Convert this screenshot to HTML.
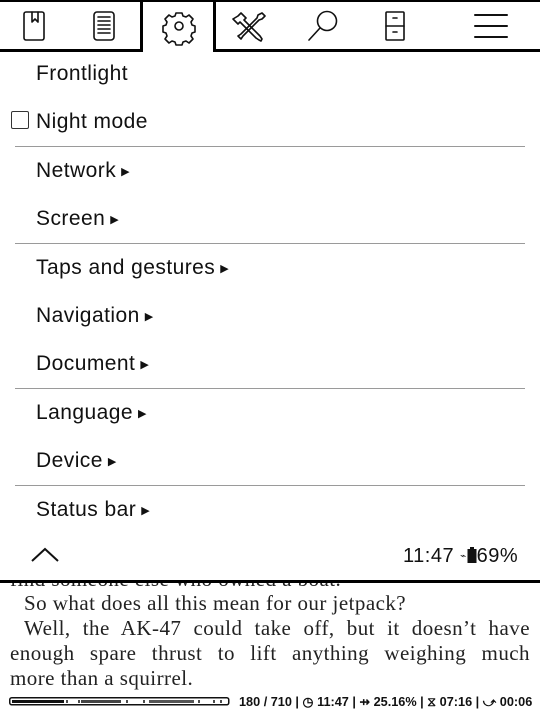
<!DOCTYPE html>
<html><head><meta charset="utf-8"><style>
*{margin:0;padding:0;box-sizing:border-box}
body{width:540px;height:710px;background:#fff;position:relative;overflow:hidden;font-family:"Liberation Sans",sans-serif;color:#111}
.abs{position:absolute}
.item{position:absolute;left:36px;font-size:21px;letter-spacing:0.45px;line-height:24px;white-space:nowrap}
.arr{font-size:11px;vertical-align:2px;margin-left:5px}
.sep{position:absolute;left:15px;width:510px;height:1px;background:#9a9a9a}
.book{position:absolute;font-family:"Liberation Serif",serif;font-size:21px;letter-spacing:0.45px;line-height:21px;color:#222;white-space:nowrap}
.j{width:520px;text-align:justify;text-align-last:justify;white-space:normal}
</style></head><body>
<div class="abs" style="left:0;top:0;width:540px;height:2px;background:#000"></div>
<div class="abs" style="left:0;top:49px;width:143px;height:3px;background:#000"></div>
<div class="abs" style="left:213px;top:49px;width:327px;height:3px;background:#000"></div>
<div class="abs" style="left:140px;top:0;width:3px;height:52px;background:#000"></div>
<div class="abs" style="left:213px;top:0;width:3px;height:52px;background:#000"></div>
<svg class="abs" style="left:0;top:0" width="540" height="52" fill="none" stroke="#111" stroke-width="1.6" stroke-linejoin="round" stroke-linecap="round">
 <rect x="24" y="12" width="20" height="28" rx="2"/><path d="M32 12v10l3-3 3 3V12"/>
 <rect x="94" y="12" width="20" height="28" rx="3"/><path d="M98 17h12M98 21h12M98 25h12M98 29h12M98 33h12"/>
 <circle cx="179" cy="26" r="4"/><path d="M176 13h6l1 3 3 1 3-2 4 4-2 3 1 3 3 1v6l-3 1-1 3 2 3-4 4-3-2-3 1-1 3h-6l-1-3-3-1-3 2-4-4 2-3-1-3-3-1v-6l3-1 1-3-2-3 4-4 3 2 3-1z"/>
 <path d="M238 16l3-3 5 5-2 2 16 16 2 3-1 2-2-1-3-2-16-16-2 2-5-5z"/><path d="M262 13l3 3-3 3-3 1-16 16-2 3-3-3 3-2 16-16 1-3z"/>
 <circle cx="327" cy="21" r="9.5"/><path d="M320 28l-11 12"/>
 <rect x="386" y="12" width="18" height="28" rx="1"/><path d="M386 26h18M393 18h4M393 32h4"/>
 <path d="M475 15h32M475 26h32M475 37h32" stroke-width="2"/>
</svg>
<div class="item" style="top:62px">Frontlight</div>
<div class="abs" style="left:11px;top:111px;width:18px;height:18px;border:1.5px solid #333;border-radius:2px"></div>
<div class="item" style="top:110px">Night mode</div>
<div class="sep" style="top:146px"></div>
<div class="item" style="top:159px">Network<span class="arr">▶</span></div>
<div class="item" style="top:207px">Screen<span class="arr">▶</span></div>
<div class="sep" style="top:243px"></div>
<div class="item" style="top:256px">Taps and gestures<span class="arr">▶</span></div>
<div class="item" style="top:304px">Navigation<span class="arr">▶</span></div>
<div class="item" style="top:352px">Document<span class="arr">▶</span></div>
<div class="sep" style="top:388px"></div>
<div class="item" style="top:401px">Language<span class="arr">▶</span></div>
<div class="item" style="top:449px">Device<span class="arr">▶</span></div>
<div class="sep" style="top:485px"></div>
<div class="item" style="top:498px">Status bar<span class="arr">▶</span></div>
<svg class="abs" style="left:30px;top:546px" width="30" height="18"><path d="M2 15L15 3 28 15" fill="none" stroke="#111" stroke-width="2"/></svg>
<div class="abs" style="left:403px;top:545px;font-size:20px;letter-spacing:0.5px;line-height:22px;white-space:nowrap">11:47 <span style="font-size:10px;vertical-align:3px">⌁</span><svg width="10" height="17" style="vertical-align:-2px"><rect x="3" y="0" width="4" height="2" fill="#111"/><rect x="0.5" y="2" width="9" height="14" fill="#111"/></svg>69%</div>
<div class="abs" style="left:0;top:580px;width:540px;height:3px;background:#000"></div>
<div class="abs" style="left:0;top:583px;width:540px;height:6px;overflow:hidden"><div class="book" style="left:10px;top:-14px">find someone else who owned a boat.</div></div>
<div class="book" style="left:24px;top:593px">So what does all this mean for our jetpack?</div>
<div class="book j" style="left:24px;top:618px;width:506px">Well, the AK-47 could take off, but it doesn’t have</div>
<div class="book j" style="left:10px;top:643px">enough spare thrust to lift anything weighing much</div>
<div class="book" style="left:10px;top:668px">more than a squirrel.</div>
<svg class="abs" style="left:9px;top:697px" width="222" height="9"><rect x="0.75" y="0.75" width="219" height="7" rx="2" fill="none" stroke="#111" stroke-width="1.5"/><rect x="3" y="3" width="52" height="3" fill="#111"/><path d="M58 3v3M70 3v3M85 3v3M100 3v3M118 3v3M135 3v3M150 3v3M170 3v3M190 3v3M205 3v3M212 3v3" stroke="#111" stroke-width="1.5"/><rect x="72" y="3" width="40" height="3" fill="#444"/><rect x="140" y="3" width="45" height="3" fill="#555"/></svg>
<div class="abs" style="left:239px;top:694px;font-size:12.7px;font-weight:bold;white-space:nowrap;color:#111">180 / 710 | ◷ 11:47 | ⇸ 25.16% | ⧖ 07:16 | ⤻ 00:06</div>
</body></html>
